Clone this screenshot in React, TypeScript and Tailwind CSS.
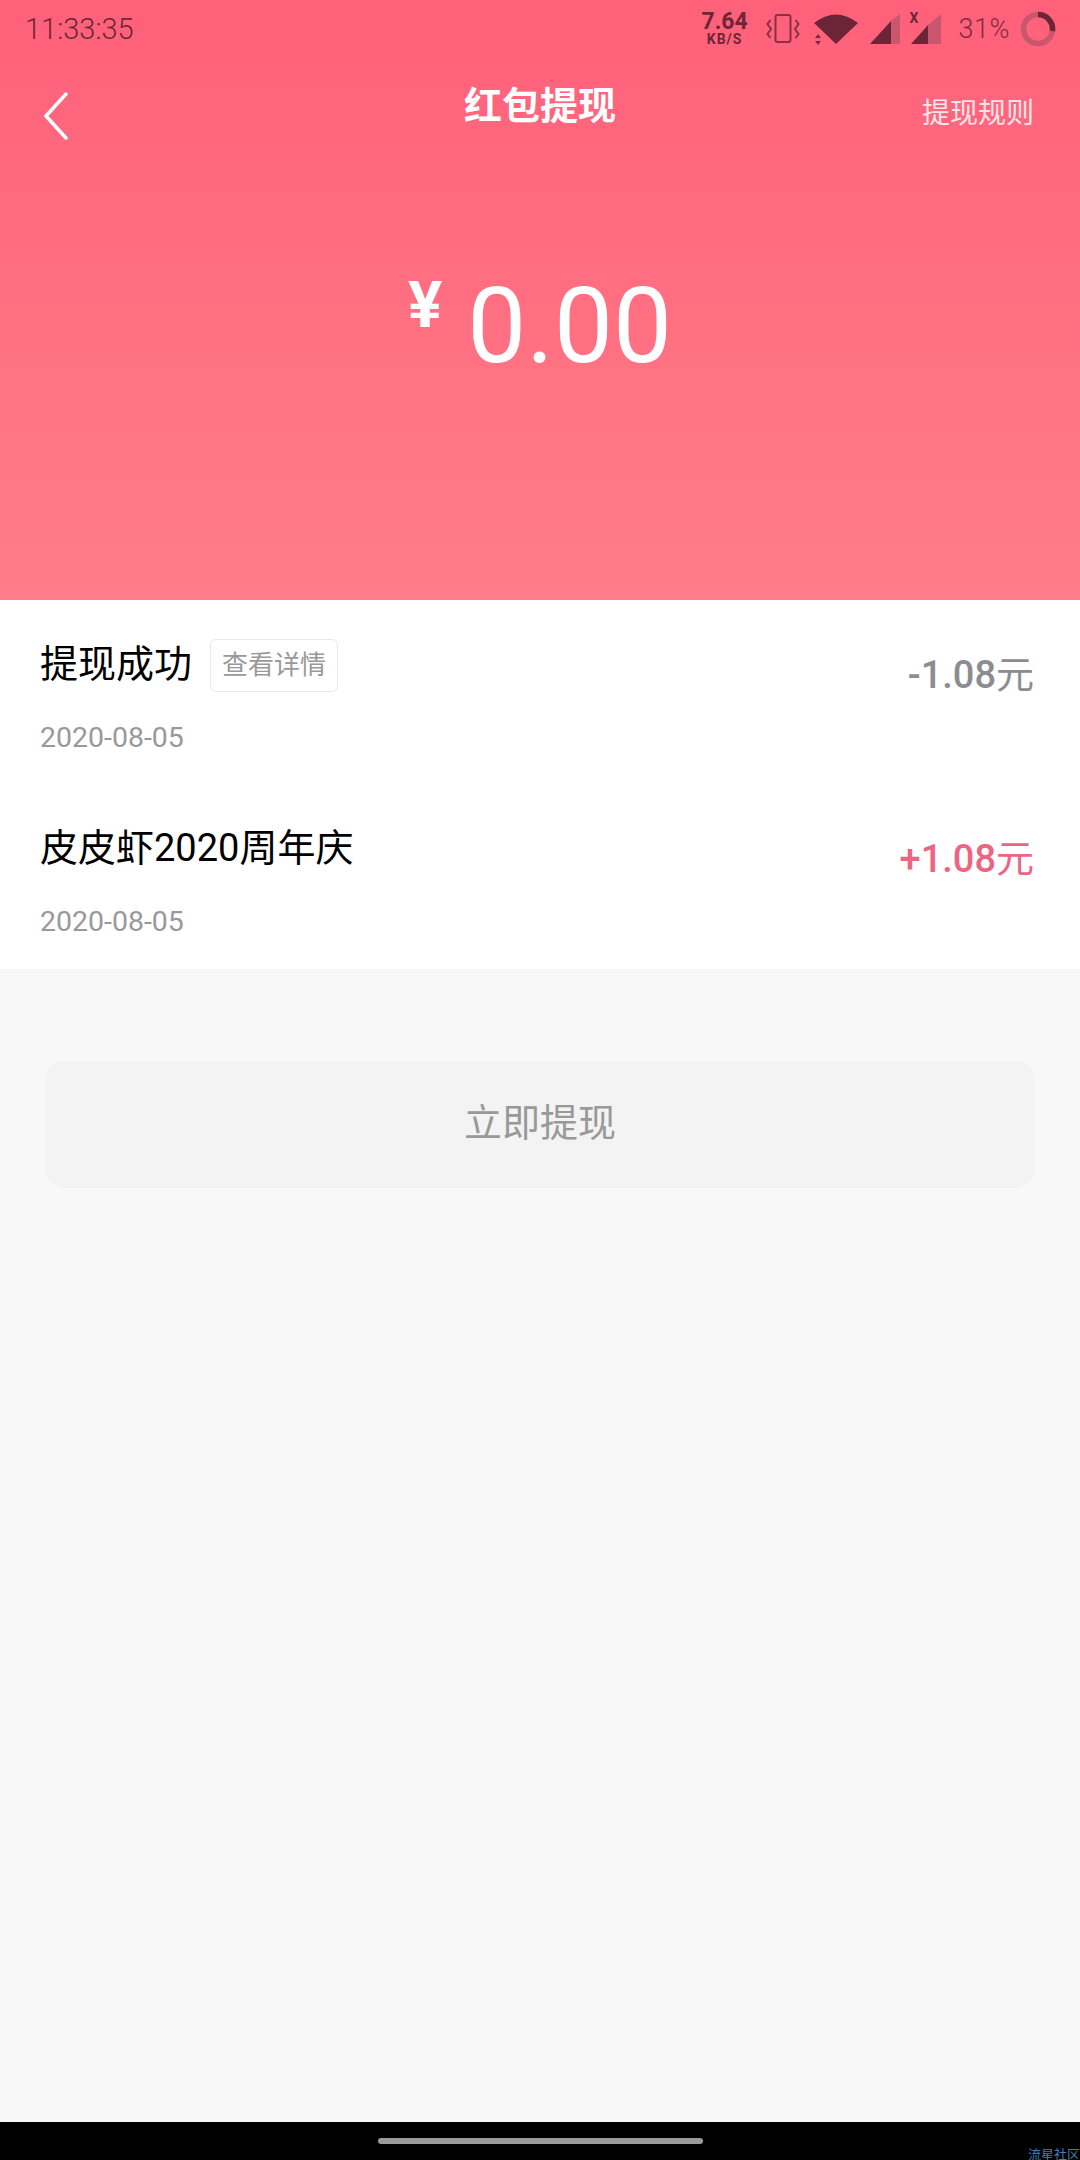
const FONT = "font-['Roboto','Noto_Sans_CJK_SC',sans-serif]";

function StatusIcons() {
  return (
    <div className="flex items-center">
      <div className="flex flex-col items-center w-[46px] text-[#6e2536] font-bold">
        <span className="text-[23px] leading-[20px]">7.64</span>
        <span className="text-[14px] leading-[14px] tracking-[1px]">KB/S</span>
      </div>
      <svg width="34" height="30" viewBox="0 0 34 30" className="ml-[18px]" fill="none" stroke="#8a3044" strokeWidth="2">
        <rect x="9.5" y="1" width="15" height="27" rx="2" />
        <path d="M4.5 6 L1.5 10 L5 15 L1.5 20 L4.5 24" />
        <path d="M29.5 6 L32.5 10 L29 15 L32.5 20 L29.5 24" />
      </svg>
      <svg width="46" height="32" viewBox="0 0 46 32" className="ml-[12px]">
        <path d="M2 10 Q24 -7 46 10 L24 31 Z" fill="#6b2536" />
        <path d="M6 21 L9 25 H3 Z M6 32 L3 28 H9 Z" fill="#7a2a3d" />
      </svg>
      <svg width="32" height="32" viewBox="0 0 32 32" className="ml-[11px]">
        <path d="M31 1 V31 H22 V8 Z" fill="#c9566d" />
        <path d="M22 8 V31 H1 Z" fill="#6b2536" />
      </svg>
      <div className="relative ml-[9px] w-[32px] h-[32px]">
        <span className="absolute left-0 top-[-3px] text-[14px] leading-[16px] font-bold text-[#6b2536]">X</span>
        <svg width="32" height="32" viewBox="0 0 32 32">
          <path d="M31 1 V31 H18 V12 Z" fill="#c9566d" />
          <path d="M18 12 V31 H1 Z" fill="#6b2536" />
        </svg>
      </div>
      <span className="ml-[17px] text-[27px] leading-[30px] text-[#7f2b40] font-light tracking-[0.5px]">31%</span>
      <svg width="36" height="36" viewBox="0 0 36 36" className="ml-[10px]" fill="none" strokeWidth="5.5">
        <circle cx="18" cy="18" r="14.5" stroke="#c9566d" />
        <path d="M18 3.5 A14.5 14.5 0 0 1 32.4 20" stroke="#6b2536" />
      </svg>
    </div>
  );
}

function Row({ title, tag, amount, color }: { title: string; tag?: boolean; amount: string; color: string }) {
  return (
    <div className="h-[184px] pl-[40px] pr-[46px] flex justify-between">
      <div className="flex flex-col">
        <div className="flex items-center h-[52px] mt-[38px]">
          <span className="text-[38px] leading-[52px] text-black">{title}</span>
          {tag && (
            <span className="ml-[18px] w-[128px] h-[53px] mt-[2px] flex items-center justify-center border border-[#e8e8e8] rounded-[6px] text-[26px] text-[#999999]">
              查看详情
            </span>
          )}
        </div>
        <span className="mt-[31px] text-[28.5px] leading-[34px] text-[#999999]">2020-08-05</span>
      </div>
      <span className={`mt-[50px] text-[38px] leading-[50px] font-medium ${color}`}>
        {amount}
        <span className="font-normal">元</span>
      </span>
    </div>
  );
}

export default function App() {
  return (
    <div className={`${FONT} w-[1080px] h-[2160px] flex flex-col bg-[#f8f8f8]`}>
      <div className="h-[600px] shrink-0 bg-gradient-to-b from-[#ff607a] to-[#ff7d88] flex flex-col">
        <div className="h-[58px] pl-[25px] pr-[24px] flex items-center justify-between">
          <span className="text-[29px] leading-[30px] font-light text-[#6e2536]">11:33:35</span>
          <StatusIcons />
        </div>
        <div className="relative h-[106px] flex items-center justify-center pb-[10px]">
          <svg width="26" height="48" viewBox="0 0 26 48" fill="none" stroke="white" strokeWidth="3.5" strokeLinecap="round" strokeLinejoin="round" className="absolute left-[43px] top-[34px]">
            <path d="M23 2 L3 24 L23 46" />
          </svg>
          <span className="text-[38px] leading-[50px] font-bold text-white">红包提现</span>
          <span className="absolute right-[46px] top-[36px] text-[28px] leading-[40px] text-[#ffe4e8]">提现规则</span>
        </div>
        <div className="flex justify-center mt-[108px]">
          <div className="flex items-start">
            <span className="text-[64px] leading-[60px] font-bold text-white mt-[4px] mr-[25px]">¥</span>
            <span className="text-[105px] leading-[110px] text-white">0.00</span>
          </div>
        </div>
      </div>
      <div className="h-[369px] shrink-0 bg-white">
        <Row title="提现成功" tag amount="-1.08" color="text-[#8c8c92]" />
        <Row title="皮皮虾2020周年庆" amount="+1.08" color="text-[#ee6584]" />
      </div>
      <div className="flex-1 px-[46px] pt-[92px]">
        <div className="h-[127px] rounded-[18px] bg-[#f3f3f3] flex items-center justify-center text-[38px] text-[#999999]">
          <span className="-mt-[2px]">立即提现</span>
        </div>
      </div>
      <div className="relative h-[38px] shrink-0 bg-black flex justify-center pt-[16px]">
        <div className="w-[325px] h-[6px] rounded-full bg-[#9a9a9a]" />
        <span className="absolute right-0 bottom-[-3px] text-[13px] leading-[16px] text-[#3f7fb5]">流星社区</span>
      </div>
    </div>
  );
}
